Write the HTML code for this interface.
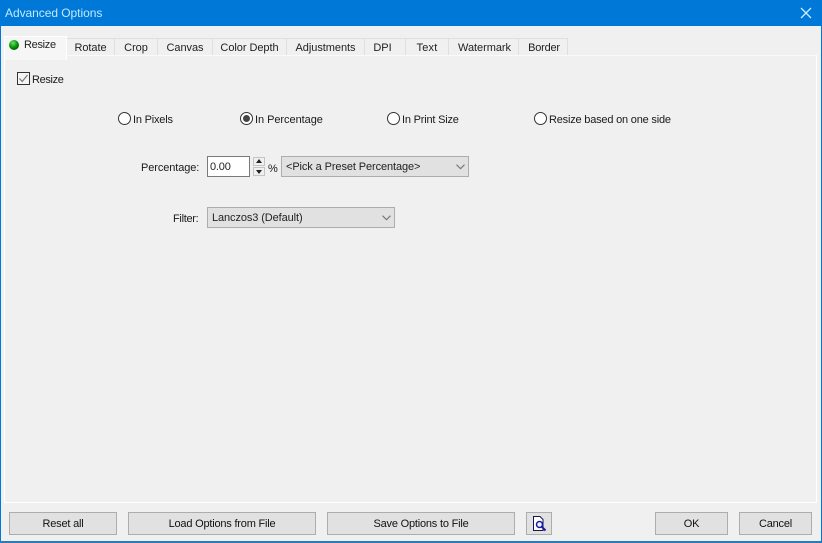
<!DOCTYPE html>
<html>
<head>
<meta charset="utf-8">
<style>
html,body{margin:0;padding:0;width:822px;height:543px;overflow:hidden;background:#f0f0f0;font-family:"Liberation Sans",sans-serif;font-size:11px;color:#1a1a1a;letter-spacing:-.2px}
.a{position:absolute;white-space:nowrap}
.t{line-height:14px;height:14px}
#title{left:0;top:0;width:822px;height:26px;background:#0078d7}
.tab{top:38px;height:17px;background:#f0f0f0;border:1px solid #dfdfdf;border-left:0;border-bottom:0;box-sizing:border-box;text-align:center;line-height:18px;color:#222;letter-spacing:-.05px}
.btn{top:512px;height:23px;background:#e1e1e1;border:1px solid #adadad;box-sizing:border-box;text-align:center;line-height:23px;color:#111}
.sel{background:#e1e1e1;border:1px solid #adadad;box-sizing:border-box;height:21px;line-height:21px;padding-left:4px;color:#222}
.r{width:13px;height:13px;border:1px solid #333;border-radius:50%;box-sizing:border-box;background:#fff}
</style>
</head>
<body>
<div class="a" id="title"></div>
<div class="a t" style="left:5px;top:6px;color:#bfeaff;font-size:12px;letter-spacing:-.05px">Advanced Options</div>
<svg class="a" style="left:800px;top:7px" width="12" height="12" viewBox="0 0 12 12"><path d="M1 1L11 11M11 1L1 11" stroke="#c8f0ff" stroke-width="1.3" fill="none"/></svg>

<div class="a" style="left:0;top:26px;width:1px;height:517px;background:#0078d7"></div>
<div class="a" style="left:821px;top:26px;width:1px;height:517px;background:#0078d7"></div>
<div class="a" style="left:0;top:541px;width:822px;height:2px;background:#2a7cb8"></div>

<div class="a" style="left:4px;top:55px;width:813px;height:448px;box-sizing:border-box;border:1px solid #fff;border-top:1px solid #fafafa"></div>

<div class="a tab" style="left:67px;width:48px">Rotate</div>
<div class="a tab" style="left:115px;width:43px">Crop</div>
<div class="a tab" style="left:158px;width:55px">Canvas</div>
<div class="a tab" style="left:213px;width:74px">Color Depth</div>
<div class="a tab" style="left:287px;width:78px">Adjustments</div>
<div class="a tab" style="left:365px;width:41px;padding-right:5px">DPI</div>
<div class="a tab" style="left:406px;width:43px;letter-spacing:.2px">Text</div>
<div class="a tab" style="left:449px;width:70px;padding-left:2px">Watermark</div>
<div class="a tab" style="left:519px;width:49px;padding-left:2px;letter-spacing:-.2px">Border</div>

<div class="a" style="left:4px;top:36px;width:63px;height:24px;background:#f6f6f6;border:1px solid #fff;border-bottom:0;box-sizing:border-box"></div>
<svg class="a" style="left:8px;top:39px" width="12" height="12" viewBox="0 0 12 12"><defs><radialGradient id="g" cx="40%" cy="30%" r="70%"><stop offset="0" stop-color="#6fe06f"/><stop offset=".55" stop-color="#0fa00f"/><stop offset="1" stop-color="#045d04"/></radialGradient></defs><circle cx="6" cy="6" r="5" fill="url(#g)"/></svg>
<div class="a t" style="left:24px;top:38px;color:#222;letter-spacing:-.3px">Resize</div>

<div class="a" style="left:17px;top:72px;width:13px;height:13px;border:1px solid #333;box-sizing:border-box;background:#f5f5f5"></div>
<svg class="a" style="left:17px;top:72px" width="13" height="13" viewBox="0 0 13 13"><path d="M2.5 6.5L5.2 9.5L10.5 3" stroke="#777" stroke-width="1.2" fill="none"/></svg>
<div class="a t" style="left:32px;top:73px;letter-spacing:-.35px">Resize</div>

<div class="a r" style="left:118px;top:112px"></div>
<div class="a t" style="left:133px;top:113px">In Pixels</div>
<div class="a r" style="left:240px;top:112px"></div>
<div class="a" style="left:243px;top:115px;width:7px;height:7px;border-radius:50%;background:#444"></div>
<div class="a t" style="left:255px;top:113px;letter-spacing:-.05px">In Percentage</div>
<div class="a r" style="left:387px;top:112px"></div>
<div class="a t" style="left:402px;top:113px">In Print Size</div>
<div class="a r" style="left:534px;top:112px"></div>
<div class="a t" style="left:549px;top:113px">Resize based on one side</div>

<div class="a t" style="left:141px;top:161px;letter-spacing:-.1px">Percentage:</div>
<div class="a" style="left:207px;top:156px;width:43px;height:21px;background:#fff;border:1px solid #7a7a7a;box-sizing:border-box;line-height:20px;padding-left:2px;color:#222">0.00</div>
<div class="a" style="left:253px;top:157px;width:12px;height:9px;background:#f0f0f0;border:1px solid #c4c4c4;box-sizing:border-box"></div>
<div class="a" style="left:253px;top:167px;width:12px;height:9px;background:#f0f0f0;border:1px solid #c4c4c4;box-sizing:border-box"></div>
<svg class="a" style="left:253px;top:157px" width="12" height="19" viewBox="0 0 12 19"><path d="M6 2L9 6H3Z" fill="#222"/><path d="M6 17L9 13H3Z" fill="#222"/></svg>
<div class="a t" style="left:268px;top:162px">%</div>
<div class="a sel" style="left:281px;top:156px;width:188px;letter-spacing:-.1px">&lt;Pick a Preset Percentage&gt;</div>
<svg class="a" style="left:456px;top:164px" width="9" height="6" viewBox="0 0 9 6"><path d="M.5 .7L4.5 4.7L8.5 .7" stroke="#777" stroke-width="1.1" fill="none"/></svg>

<div class="a t" style="left:173px;top:212px;letter-spacing:-.3px">Filter:</div>
<div class="a sel" style="left:207px;top:207px;width:188px;letter-spacing:-.1px">Lanczos3 (Default)</div>
<svg class="a" style="left:382px;top:215px" width="9" height="6" viewBox="0 0 9 6"><path d="M.5 .7L4.5 4.7L8.5 .7" stroke="#777" stroke-width="1.1" fill="none"/></svg>

<div class="a btn" style="left:9px;width:108px">Reset all</div>
<div class="a btn" style="left:128px;width:188px">Load Options from File</div>
<div class="a btn" style="left:327px;width:188px">Save Options to File</div>
<div class="a btn" style="left:526px;width:26px"></div>
<svg class="a" style="left:531px;top:515px" width="18" height="18" viewBox="0 0 18 18"><path d="M2.5 1.5H9L12 4.5V15.5H2.5Z" fill="#fff" stroke="#14145e" stroke-width="1"/><circle cx="8.5" cy="9.5" r="3" fill="#e8f4ff" stroke="#1c1c9e" stroke-width="1.5"/><path d="M10.5 11.5L14.5 15.5" stroke="#1c1c9e" stroke-width="2"/></svg>
<div class="a btn" style="left:655px;width:73px">OK</div>
<div class="a btn" style="left:739px;width:73px">Cancel</div>
</body>
</html>
